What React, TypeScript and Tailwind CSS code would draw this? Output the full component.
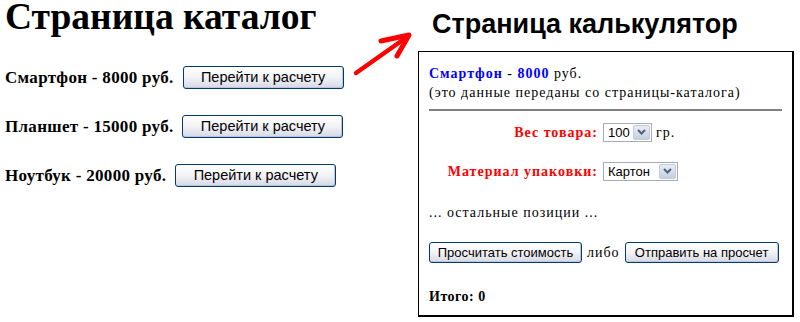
import React from "react";

function XpButton({ label, className }: { label: string; className: string }) {
  return (
    <button
      className={
        "flex items-center justify-center whitespace-nowrap rounded-[3px] border border-[#003c74] bg-linear-to-b from-white via-[#f3f3f6] to-[#d5d8e5] font-['Liberation_Sans',sans-serif] tracking-normal text-black shadow-[inset_-1px_-1px_0_#c0c4d6] " +
        className
      }
    >
      {label}
    </button>
  );
}

function XpSelect({ value, width }: { value: string; width: string }) {
  return (
    <div className={"flex h-[19px] items-center justify-between border border-[#a5acb5] bg-white p-[1px] " + width}>
      <span className="pl-[3px] font-['Liberation_Sans',sans-serif] text-[13px] leading-none tracking-normal text-black">
        {value}
      </span>
      <span className="flex h-[15px] w-[17px] items-center justify-center rounded-[2px] border border-[#c3cbd7] bg-linear-to-b from-[#e8ecf5] to-[#c6cfe0]">
        <svg width="9" height="6" viewBox="0 0 9 6">
          <path d="M1 1 L4.5 4.5 L8 1" fill="none" stroke="#4d6185" strokeWidth="2" />
        </svg>
      </span>
    </div>
  );
}

export default function App() {
  const items = [
    { name: "Смартфон", price: "8000" },
    { name: "Планшет", price: "15000" },
    { name: "Ноутбук", price: "20000" },
  ];

  return (
    <div className="relative flex h-[322px] w-[800px] overflow-hidden bg-white text-black">
      {/* каталог */}
      <div className="w-[418px] pl-[5px]">
        <h1 className="h-[36px] font-['Liberation_Serif',serif] text-[37.5px] font-bold leading-[34px]">
          Страница каталог
        </h1>
        <div className="mt-[30px] flex flex-col gap-[26px]">
          {items.map((it) => (
            <div key={it.name} className="flex h-[23px] items-center gap-[9px]">
              <span className="font-['Liberation_Serif',serif] text-[17px] font-bold tracking-[0.3px]">
                {it.name} - {it.price} руб.
              </span>
              <XpButton label="Перейти к расчету" className="h-[23px] w-[161px] text-[14.5px]" />
            </div>
          ))}
        </div>
      </div>

      {/* калькулятор */}
      <div className="flex flex-col">
        <h2 className="ml-[14px] mt-[9px] h-[30px] font-['Liberation_Sans',sans-serif] text-[27px] font-bold leading-[30px]">
          Страница калькулятор
        </h2>
        <div className="mt-[12px] h-[266px] w-[376px] border border-r-2 border-b-2 border-black px-[10px] pt-[12px] font-['Liberation_Serif',serif] text-[14px] tracking-[1px]">
          <div className="h-[19px] leading-[19px]">
            <span className="font-bold text-[#0000ff]">Смартфон</span> -{" "}
            <span className="font-bold text-[#0000ff]">8000</span> руб.
          </div>
          <div className="h-[19px] leading-[19px]">(это данные переданы со страницы-каталога)</div>
          <div className="mt-[7px] h-[2px] w-[353px] bg-[#808080]" />

          <div className="mt-[11px] flex h-[20px] items-center">
            <span className="w-[169px] text-right font-bold text-[#ff0000]">Вес товара:</span>
            <div className="ml-[5px]">
              <XpSelect value="100" width="w-[49px]" />
            </div>
            <span className="ml-[4px]">гр.</span>
          </div>
          <div className="mt-[19px] flex h-[20px] items-center">
            <span className="w-[169px] text-right font-bold text-[#ff0000]">Материал упаковки:</span>
            <div className="ml-[5px]">
              <XpSelect value="Картон" width="w-[75px]" />
            </div>
          </div>

          <div className="mt-[22px] h-[20px] leading-[20px]">... остальные позиции ...</div>

          <div className="mt-[19px] flex h-[21px] items-center">
            <XpButton label="Просчитать стоимость" className="h-[21px] w-[153px] text-[13px]" />
            <span className="mx-[5px]">либо</span>
            <XpButton label="Отправить на просчет" className="h-[21px] w-[154px] text-[13px]" />
          </div>

          <div className="mt-[24px] h-[20px] font-bold leading-[20px] tracking-[0.5px]">Итого: 0</div>
        </div>
      </div>

      {/* стрелка */}
      <svg className="absolute left-0 top-0" width="800" height="322" viewBox="0 0 800 322">
        <path d="M356 73 L407 37" stroke="#ff0000" strokeWidth="4.5" strokeLinecap="round" fill="none" />
        <path d="M381 41 L409 35 L397 56" stroke="#ff0000" strokeWidth="5" strokeLinecap="round" strokeLinejoin="round" fill="none" />
      </svg>
    </div>
  );
}
